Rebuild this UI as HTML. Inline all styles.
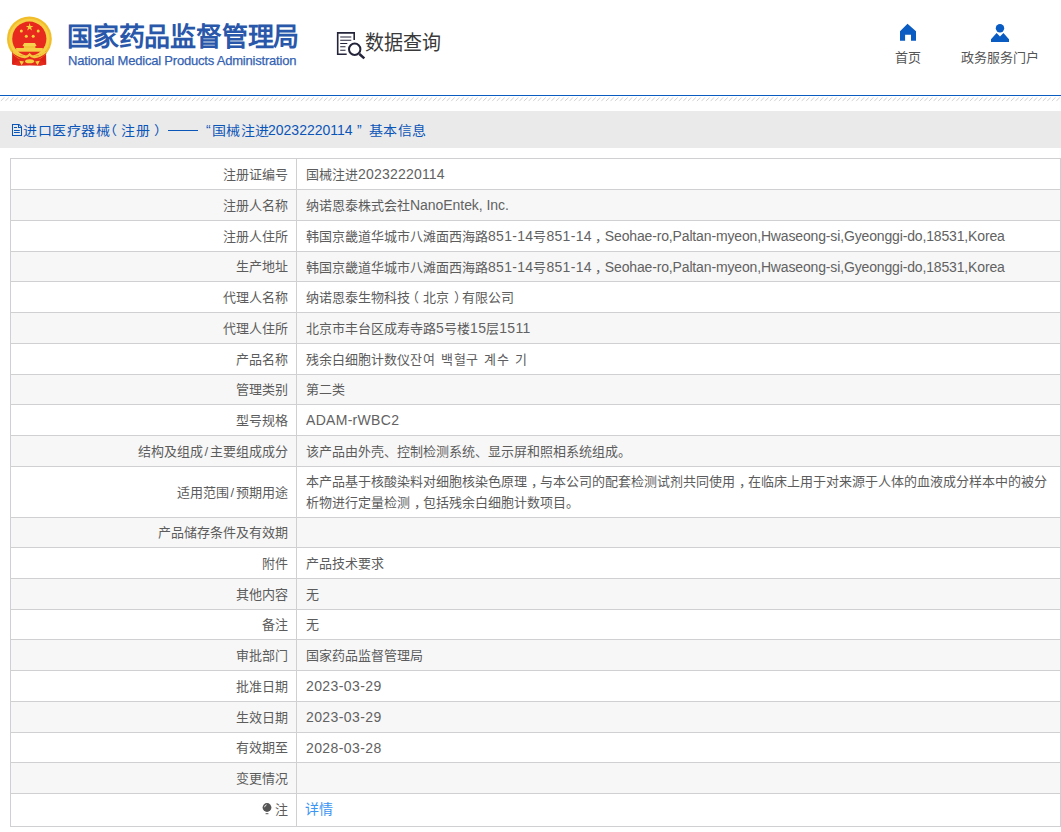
<!DOCTYPE html>
<html lang="zh-CN">
<head>
<meta charset="utf-8">
<style>
*{margin:0;padding:0;box-sizing:border-box}
html,body{width:1061px;height:832px;overflow:hidden;background:#fff;font-family:"Liberation Sans",sans-serif;color:#555}
.ab{position:absolute;white-space:nowrap}
.title{left:67px;top:20px;font-size:26px;line-height:34px;font-weight:bold;color:#2957aa;letter-spacing:-0.2px}
.en{left:68px;top:53px;font-size:13px;line-height:16px;color:#3462b2;letter-spacing:-0.2px;-webkit-text-stroke:0.25px #3462b2}
.sj{left:365px;top:29px;font-size:19px;line-height:28px;color:#3a3a3a;transform:scaleY(1.08);transform-origin:0 4px}
.nav{top:49px;font-size:13px;line-height:18px;color:#555}
.line{left:0;top:95px;width:1061px;height:1px;background:#0a5cc0}
.bar{left:0;top:111px;width:1061px;height:37px;background:#eaeaea}
.cr{top:121px;font-size:14px;line-height:20px;color:#0a55b8;transform:scaleY(0.9);transform-origin:0 3px;letter-spacing:0.6px}
.cd{top:120px;font-size:14px;line-height:20px;color:#0a55b8}
table{position:absolute;left:10px;top:158px;width:1051px;border-collapse:collapse;font-size:13px;color:#5c5c5c}
td{border:1px solid #d0cfd1;padding:1px 10px 0 9px;vertical-align:middle;line-height:20px;white-space:nowrap}
td.l{width:286px;text-align:right;padding-right:8px;padding-left:0}
tr:nth-child(even) td{background:#f7f7f7}
.e{font-size:14px;letter-spacing:0.3px;color:#626262}
.cm{position:relative;left:4px}
.ko{letter-spacing:0.8px;word-spacing:0.7px}
</style>
</head>
<body>
<!-- emblem -->
<svg class="ab" style="left:0;top:0" width="60" height="72" viewBox="0 0 60 72">
 <path d="M12.2 51.5L46 51.5L46.3 64.4L40.5 65.6L29.6 65.2L18.5 65.6L12 64.4Z" fill="#de2117"/>
 <circle cx="29.4" cy="38.9" r="22.4" fill="#f1bd2a"/>
 <circle cx="29.4" cy="38.9" r="20.2" fill="#f6cf45"/>
 <circle cx="29.3" cy="38.7" r="17.1" fill="#e8291e"/>
 <path d="M12.2 53.5Q16 57 20 59L12.5 64.4L18.5 65.6L29.6 65.2L40.5 65.6L46.3 64.4L39 59Q43 57 46.4 53.5L46 51.5Q38 57.5 29.6 55.4Q21 57.5 12.4 51.5Z" fill="#e32a1c"/>
 <path d="M13 52Q20 57.5 25 57.2Q28 56.5 29.6 54.5Q31.2 56.5 34.2 57.2Q39 57.5 45.8 52" fill="none" stroke="#f3c83a" stroke-width="2.2"/>
 <path d="M19.3 60.8L21.5 65.3L24 61.5Z M39.8 60.8L37.6 65.3L35.2 61.5Z" fill="#f5d040"/>
 <ellipse cx="29.6" cy="61.2" rx="4.5" ry="2" fill="#f5d040"/>
 <path d="M24.2 43L35 43L36.6 46.1L22.5 46.1Z" fill="#f7d24e"/>
 <rect x="23.8" y="46" width="11.6" height="2.2" fill="#f2c43a"/>
 <rect x="16.1" y="48" width="26.7" height="3.7" fill="#f6cd45"/>
 <g fill="#f6d33a">
  <path d="M29.6 23.1L30.5 25.9L33.5 25.9L31.1 27.6L32 30.4L29.6 28.7L27.2 30.4L28.1 27.6L25.7 25.9L28.7 25.9Z"/>
  <circle cx="21.3" cy="31.1" r="1.5"/><circle cx="38.2" cy="31.1" r="1.5"/>
  <circle cx="26.3" cy="36.2" r="1.5"/><circle cx="33.2" cy="36.2" r="1.5"/>
 </g>
</svg>
<div class="ab title">国家药品监督管理局</div>
<div class="ab en">National Medical Products Administration</div>
<svg class="ab" style="left:330px;top:26px" width="40" height="38" viewBox="330 26 40 38">
 <g fill="none" stroke="#23233a">
  <path d="M346.7 54.2H337.7V32.9H354.2V40" stroke-width="1.6"/>
  <path d="M340.2 37H351.3M340.2 40.3H351.3M340.2 43.5H347.3M340.2 46.8H345.5M340.2 50.3H345.5" stroke-width="1.1"/>
  <circle cx="354.7" cy="49.3" r="5.7" stroke-width="2"/>
  <path d="M359.4 54L364.3 58.4" stroke-width="2.6"/>
 </g>
</svg>
<div class="ab sj">数据查询</div>
<svg class="ab" style="left:895px;top:20px" width="26" height="24" viewBox="895 20 26 24">
 <path d="M907.5 23.8L900 31.2V40.8H905.1V34.8H911V40.8H916V31.2Z" fill="#0a5cc2"/>
</svg>
<div class="ab nav" style="left:895px">首页</div>
<svg class="ab" style="left:988px;top:20px" width="24" height="24" viewBox="988 20 24 24">
 <circle cx="1000" cy="28.2" r="4.2" fill="#0a5cc2"/>
 <path d="M991 42V39.2L996.6 33.1L1000 36.4L1003.4 33.1L1009 39.2V42Z" fill="#0a5cc2"/>
</svg>
<div class="ab nav" style="left:961px">政务服务门户</div>
<div class="ab line"></div>
<svg class="ab" style="left:0;top:96px" width="1061" height="6">
 <defs><pattern id="h" width="4.55" height="6" patternUnits="userSpaceOnUse"><path d="M0.8 5L4.3 1.5" stroke="#cacaca" stroke-width="0.9"/></pattern></defs>
 <rect width="1061" height="6" fill="url(#h)"/>
</svg>
<div class="ab bar"></div>
<svg class="ab" style="left:10px;top:122px" width="14" height="16" viewBox="10 122 14 16">
 <path d="M12.5 124.5H19L21.5 127V135.5H12.5Z" fill="none" stroke="#0a55b8" stroke-width="1.05"/>
 <path d="M18.5 124.5V127.5H21.5" fill="none" stroke="#0a55b8" stroke-width="1.05"/>
 <path d="M14 127.5H17M14 130.5H19.8M14 132.5H19.8" stroke="#0a55b8" stroke-width="1"/>
</svg>
<div class="ab cr" style="left:23px">进口医疗器械</div>
<div class="ab cr" style="left:103px">（</div>
<div class="ab cr" style="left:121px">注册</div>
<div class="ab cr" style="left:154px">）</div>
<div class="ab" style="left:168px;top:130px;width:30px;height:1px;background:#0a55b8"></div>
<div class="ab cd" style="left:206px">“</div>
<div class="ab cr" style="left:211.5px">国械注进</div>
<div class="ab cd" style="left:268px">20232220114</div>
<div class="ab cd" style="left:357px">”</div>
<div class="ab cr" style="left:368.7px">基本信息</div>
<table>
<tr style="height:31px"><td class="l">注册证编号</td><td>国械注进<span class="e" style="letter-spacing:0.2px">20232220114</span></td></tr>
<tr style="height:31px"><td class="l">注册人名称</td><td>纳诺恩泰株式会社<span class="e" style="letter-spacing:-0.05px">NanoEntek, Inc.</span></td></tr>
<tr style="height:31px"><td class="l">注册人住所</td><td>韩国京畿道华城市八滩面西海路<span class="e">851-14</span>号<span class="e">851-14</span><span style="position:relative;left:3px">，</span><span class="e" style="letter-spacing:-0.15px">Seohae-ro,Paltan-myeon,Hwaseong-si,Gyeonggi-do,18531,Korea</span></td></tr>
<tr style="height:30px"><td class="l">生产地址</td><td>韩国京畿道华城市八滩面西海路<span class="e">851-14</span>号<span class="e">851-14</span><span style="position:relative;left:3px">，</span><span class="e" style="letter-spacing:-0.15px">Seohae-ro,Paltan-myeon,Hwaseong-si,Gyeonggi-do,18531,Korea</span></td></tr>
<tr style="height:31px"><td class="l">代理人名称</td><td>纳诺恩泰生物科技<span style="position:relative;left:-4px">（</span>北京<span style="position:relative;left:5px">）</span>有限公司</td></tr>
<tr style="height:31px"><td class="l">代理人住所</td><td>北京市丰台区成寿寺路<span class="e">5</span>号楼<span class="e">15</span>层<span class="e">1511</span></td></tr>
<tr style="height:31px"><td class="l">产品名称</td><td>残余白细胞计数仪<span class="ko">잔여 백혈구 계수 기</span></td></tr>
<tr style="height:30px"><td class="l">管理类别</td><td>第二类</td></tr>
<tr style="height:31px"><td class="l">型号规格</td><td><span class="e">ADAM-rWBC2</span></td></tr>
<tr style="height:31px"><td class="l">结构及组成<span style="margin:0 1.8px">/</span>主要组成成分</td><td>该产品由外壳、控制检测系统、显示屏和照相系统组成。</td></tr>
<tr style="height:51px"><td class="l">适用范围<span style="margin:0 1.8px">/</span>预期用途</td><td style="white-space:normal;padding-top:0;padding-bottom:1px;line-height:21px">本产品基于核酸染料对细胞核染色原理<span class="cm">，</span>与本公司的配套检测试剂共同使用<span class="cm">，</span>在临床上用于对来源于人体的血液成分样本中的被分<br>析物进行定量检测<span class="cm">，</span>包括残余白细胞计数项目。</td></tr>
<tr style="height:30px"><td class="l">产品储存条件及有效期</td><td></td></tr>
<tr style="height:31px"><td class="l">附件</td><td>产品技术要求</td></tr>
<tr style="height:31px"><td class="l">其他内容</td><td>无</td></tr>
<tr style="height:30px"><td class="l">备注</td><td>无</td></tr>
<tr style="height:31px"><td class="l">审批部门</td><td>国家药品监督管理局</td></tr>
<tr style="height:31px"><td class="l">批准日期</td><td><span class="e" style="letter-spacing:0.4px">2023-03-29</span></td></tr>
<tr style="height:31px"><td class="l">生效日期</td><td><span class="e" style="letter-spacing:0.4px">2023-03-29</span></td></tr>
<tr style="height:30px"><td class="l">有效期至</td><td><span class="e" style="letter-spacing:0.4px">2028-03-28</span></td></tr>
<tr style="height:31px"><td class="l">变更情况</td><td></td></tr>
<tr style="height:33px"><td class="l" style="padding-top:0;padding-bottom:1px"><svg width="11" height="14" viewBox="0 0 11 14" style="vertical-align:-2px;margin-right:2px"><circle cx="5" cy="5.5" r="4.4" fill="#555"/><path d="M2.6 5.2Q2.8 3.2 4.6 2.8" stroke="#fff" stroke-width="0.9" fill="none"/><rect x="3.6" y="11.2" width="2.8" height="1" fill="#555"/></svg>注</td><td style="padding-top:0;padding-bottom:1px"><span style="color:#3b95f2;font-size:14px;margin-left:-1px">详情</span></td></tr>
</table>
</body>
</html>
